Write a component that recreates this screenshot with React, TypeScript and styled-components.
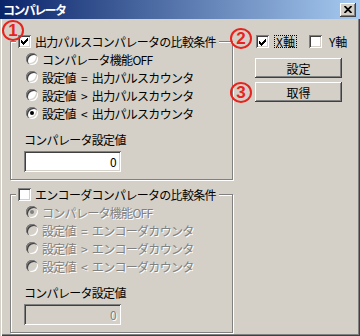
import React from "react";
import styled, { createGlobalStyle, css } from "styled-components";

const face = "#d4d0c8";
const shade = "#808080";
const dark = "#404040";
const white = "#ffffff";
const red = "#e8231d";

const GlobalStyle = createGlobalStyle`
  html, body {
    margin: 0;
    padding: 0;
    background: ${face};
  }
`;

const raised = css`
  background: ${face};
  box-shadow: inset -1px -1px 0 ${dark}, inset 1px 1px 0 ${white},
    inset -2px -2px 0 ${shade}, inset 2px 2px 0 ${face};
`;

const sunken = css`
  box-shadow: inset 1px 1px 0 ${shade}, inset -1px -1px 0 ${white},
    inset 2px 2px 0 ${dark}, inset -2px -2px 0 ${face};
`;

const Window = styled.div`
  position: relative;
  width: 360px;
  height: 336px;
  box-sizing: border-box;
  background: ${face};
  box-shadow: inset 1px 0 0 ${face}, inset 2px 0 0 ${white},
    inset -1px -1px 0 ${dark}, inset -2px -2px 0 ${shade};
  display: flex;
  flex-direction: column;
  color: #000;
  font-family: "Noto Sans CJK JP", sans-serif;
  font-size: 12px;
  letter-spacing: -0.7px;
  word-spacing: 3px;
  overflow: hidden;
`;

const TitleBar = styled.div`
  height: 19px;
  flex: none;
  display: flex;
  align-items: center;
  justify-content: space-between;
  padding: 0 4px 0 3px;
  background: linear-gradient(to right, #0a246a, #a6caf0);
`;

const Title = styled.span`
  color: ${white};
  font-weight: bold;
  font-size: 12px;
  line-height: 19px;
  letter-spacing: -1.6px;
`;

const CloseButton = styled.span`
  ${raised};
  width: 16px;
  height: 14px;
  display: flex;
  align-items: center;
  justify-content: center;
`;

const Body = styled.div`
  display: flex;
  padding: 16px 0 0 10px;
`;

const LeftColumn = styled.div`
  width: 223px;
  flex: none;
  display: flex;
  flex-direction: column;
  gap: 8px;
`;

const GroupBox = styled.fieldset`
  margin: 0;
  padding: 0 0 7px 0;
  min-width: 0;
  border: 1px solid ${shade};
  box-shadow: 1px 1px 0 ${white}, inset 1px 1px 0 ${white};
`;

const Legend = styled.legend`
  display: flex;
  align-items: center;
  gap: 4px;
  height: 13px;
  margin-left: 5px;
  padding: 0 3px 0 2px;
  background: ${face};
  line-height: 13px;
`;

const RadioList = styled.div`
  padding-top: 2px;
  display: flex;
  flex-direction: column;
`;

const Row = styled.div<{ $off?: boolean }>`
  height: 18px;
  display: flex;
  align-items: center;
  gap: 4px;
  padding-left: 15px;
  white-space: pre;
  ${(p) =>
    p.$off &&
    css`
      color: ${shade};
      text-shadow: 1px 1px 0 ${white};
    `}
`;

const Radio = styled.span<{ $checked?: boolean; $off?: boolean }>`
  position: relative;
  flex: none;
  width: 12px;
  height: 12px;
  border-radius: 50%;
  background: ${(p) => (p.$off ? face : white)};
  box-shadow: inset 1px 1px 0 ${shade}, inset 2px 2px 0 ${dark},
    inset -1px -1px 0 ${white}, inset -2px -2px 0 ${face};
  ${(p) =>
    p.$checked &&
    css`
      &::after {
        content: "";
        position: absolute;
        left: 4px;
        top: 4px;
        width: 4px;
        height: 4px;
        border-radius: 50%;
        background: ${p.$off ? shade : "#000"};
      }
    `}
`;

const Box = styled.span<{ $off?: boolean }>`
  flex: none;
  width: 13px;
  height: 13px;
  background: ${(p) => (p.$off ? face : white)};
  ${sunken};
`;

const FieldLabel = styled.div`
  margin-top: 9px;
  padding-left: 13px;
  height: 18px;
  line-height: 18px;
`;

const ValueBox = styled.div<{ $off?: boolean }>`
  ${sunken};
  margin: 2px 0 0 13px;
  width: 97px;
  height: 21px;
  box-sizing: border-box;
  padding-right: 5px;
  text-align: right;
  line-height: 21px;
  background: ${(p) => (p.$off ? face : white)};
  color: ${(p) => (p.$off ? shade : "#000")};
  ${(p) => p.$off && `text-shadow: 1px 1px 0 ${white};`}
`;

const RightColumn = styled.div`
  display: flex;
  flex-direction: column;
  padding-left: 22px;
`;

const AxisRow = styled.div`
  height: 13px;
  display: flex;
  align-items: center;
  padding-left: 1px;
  margin-bottom: 6px;
  white-space: nowrap;
`;

const AxisLabel = styled.span<{ $focus?: boolean }>`
  height: 13px;
  line-height: 13px;
  padding: 0 1px;
  margin: 0 12px 0 5px;
  letter-spacing: 0;
  border: 1px dotted ${(p) => (p.$focus ? "#000" : "transparent")};
  box-sizing: border-box;
  display: flex;
  align-items: center;
`;

const Button = styled.div`
  ${raised};
  width: 87px;
  height: 20px;
  margin-top: 4px;
  display: flex;
  align-items: center;
  justify-content: center;
  letter-spacing: 0;
`;

const Mark = styled.span<{ $x: number; $y: number }>`
  position: absolute;
  left: ${(p) => p.$x}px;
  top: ${(p) => p.$y}px;
  width: 22px;
  height: 21px;
  box-sizing: border-box;
  border: 2px solid ${red};
  border-radius: 50%;
  display: flex;
  align-items: center;
  justify-content: center;
  color: ${red};
  font-family: "Liberation Sans", sans-serif;
  font-weight: bold;
  font-size: 17px;
  letter-spacing: 0;
  line-height: 1;
`;

// classic 7x7 pixel check mark
const checkCols = [2, 3, 4, 3, 2, 1, 0];

function CheckMark() {
  return (
    <svg width="13" height="13" viewBox="0 0 13 13" shapeRendering="crispEdges">
      {checkCols.map((start, i) => (
        <rect key={i} x={3 + i} y={3 + start} width="1" height="3" fill="#000" />
      ))}
    </svg>
  );
}

function Checkbox({ checked }: { checked?: boolean }) {
  return <Box>{checked && <CheckMark />}</Box>;
}

const rows = (kind: string) => [
  "コンパレータ機能OFF",
  `設定値 = ${kind}カウンタ`,
  `設定値 > ${kind}カウンタ`,
  `設定値 < ${kind}カウンタ`,
];

export default function App() {
  return (
    <>
      <GlobalStyle />
      <Window>
        <TitleBar>
          <Title>コンパレータ</Title>
          <CloseButton>
            <svg width="8" height="7" viewBox="0 0 8 7">
              <path d="M0.5 0 L7.5 7 M7.5 0 L0.5 7" stroke="#000" strokeWidth="1.8" />
            </svg>
          </CloseButton>
        </TitleBar>
        <Body>
          <LeftColumn>
            <GroupBox>
              <Legend>
                <Checkbox checked />
                出力パルスコンパレータの比較条件
              </Legend>
              <RadioList>
                {rows("出力パルス").map((text, i) => (
                  <Row key={text}>
                    <Radio $checked={i === 3} />
                    {text}
                  </Row>
                ))}
              </RadioList>
              <FieldLabel>コンパレータ設定値</FieldLabel>
              <ValueBox>0</ValueBox>
            </GroupBox>
            <GroupBox>
              <Legend>
                <Checkbox />
                エンコーダコンパレータの比較条件
              </Legend>
              <RadioList>
                {rows("エンコーダ").map((text, i) => (
                  <Row key={text} $off>
                    <Radio $off $checked={i === 0} />
                    {text}
                  </Row>
                ))}
              </RadioList>
              <FieldLabel>コンパレータ設定値</FieldLabel>
              <ValueBox $off>0</ValueBox>
            </GroupBox>
          </LeftColumn>
          <RightColumn>
            <AxisRow>
              <Checkbox checked />
              <AxisLabel $focus>X軸</AxisLabel>
              <Checkbox />
              <AxisLabel>Y軸</AxisLabel>
            </AxisRow>
            <Button>設定</Button>
            <Button>取得</Button>
          </RightColumn>
        </Body>
        <Mark $x={2} $y={20}>1</Mark>
        <Mark $x={230} $y={28}>2</Mark>
        <Mark $x={230} $y={82}>3</Mark>
      </Window>
    </>
  );
}
